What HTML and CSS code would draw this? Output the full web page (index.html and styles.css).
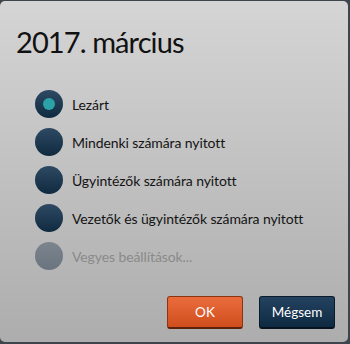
FILE: index.html
```html
<!DOCTYPE html>
<html lang="hu">
<head>
<meta charset="utf-8">
<link rel="stylesheet" href="styles.css">
</head>
<body>
<div class="dialog">
  <h1 class="title">2017. március</h1>
  <ul class="options">
    <li class="option"><span class="radio checked"></span><span class="label">Lezárt</span></li>
    <li class="option"><span class="radio"></span><span class="label">Mindenki számára nyitott</span></li>
    <li class="option"><span class="radio"></span><span class="label">Ügyintézők számára nyitott</span></li>
    <li class="option"><span class="radio"></span><span class="label">Vezetők és ügyintézők számára nyitott</span></li>
    <li class="option disabled"><span class="radio"></span><span class="label">Vegyes beállítások...</span></li>
  </ul>
  <div class="actions">
    <button class="btn btn-ok">OK</button>
    <button class="btn btn-cancel">Mégsem</button>
  </div>
</div>
</body>
</html>
```
FILE: styles.css
```css
html, body {
  margin: 0;
  padding: 0;
  background: #3e454c;
  width: 350px;
  height: 344px;
  overflow: hidden;
}
.dialog {
  box-sizing: border-box;
  margin: 1px 2px 0 0;
  width: 348px;
  height: 341px;
  border-radius: 5px;
  background: linear-gradient(#d5d5d5, #adadad);
  font-family: Lato, "Open Sans", sans-serif;
  display: flex;
  flex-direction: column;
  padding: 23px 0 0 0;
}
.title {
  margin: 0 0 0 16px;
  font-size: 29px;
  letter-spacing: -0.9px;
  font-weight: 400;
  color: #111;
  line-height: 36px;
}
.options {
  list-style: none;
  margin: 30px 0 0 0;
  padding: 0 0 0 35px;
  display: flex;
  flex-direction: column;
  gap: 10px;
}
.option {
  display: flex;
  align-items: center;
  height: 28px;
}
.radio {
  width: 28px;
  height: 28px;
  border-radius: 50%;
  background: linear-gradient(#2e4a63, #0f2a40);
  display: flex;
  align-items: center;
  justify-content: center;
  flex: none;
}
.radio.checked::after {
  content: "";
  width: 12px;
  height: 12px;
  border-radius: 50%;
  background: #2aa2a8;
}
.label {
  margin-left: 9px;
  font-size: 14px;
  letter-spacing: -0.1px;
  color: #141414;
}
.disabled .radio {
  background: linear-gradient(#7c858e, #6a747e);
}
.disabled .label {
  color: #8a8a8a;
}
.actions {
  margin-top: auto;
  display: flex;
  justify-content: flex-end;
  gap: 16px;
  padding: 0 13px 13px 0;
}
.btn {
  width: 76px;
  height: 33px;
  border-radius: 3px;
  font-family: Lato, "Open Sans", sans-serif;
  font-size: 13.5px;
  color: #fff;
  padding: 0;
  cursor: pointer;
}
.btn-ok {
  background: linear-gradient(#ea6c3d, #d04e1e);
  border: 1px solid #8a3412;
  border-bottom: 2px solid #5e220a;
}
.btn-cancel {
  background: linear-gradient(#244360, #0e2a42);
  border: 1px solid #0a1b2b;
  border-bottom: 2px solid #071420;
}
```
